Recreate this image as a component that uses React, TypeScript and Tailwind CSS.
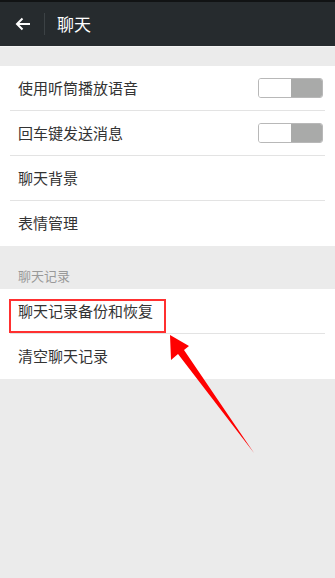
import type { ReactNode } from "react";

const FONT = { fontFamily: '"Noto Sans CJK SC", "Noto Sans", sans-serif' };

function Toggle() {
  return (
    <div className="flex h-[20px] w-[65px] overflow-hidden rounded-[3px] border border-[#b8b8b8]">
      <div className="flex-1 bg-white" />
      <div className="flex-1 bg-[#a9aaa9]" />
    </div>
  );
}

function Row({ label, last, right }: { label: string; last?: boolean; right?: ReactNode }) {
  return (
    <div className="px-[10px]">
      <div
        className={`flex h-[45px] items-center justify-between pl-[8px] pr-[2px] ${
          last ? "" : "border-b border-[#e3e3e3]"
        }`}
      >
        <span className="text-[15px] text-[#333333]">{label}</span>
        {right}
      </div>
    </div>
  );
}

export default function App() {
  return (
    <div className="relative min-h-[578px] w-full bg-[#ebebeb]" style={FONT}>
      {/* title bar */}
      <div className="flex h-[46px] items-center border-t-2 border-[#111314] bg-[#262b2e]">
        <div className="flex w-[44px] justify-center pl-[1px]">
          <svg width="16" height="14" viewBox="0 0 16 14" fill="none" stroke="white" strokeWidth="2">
            <path d="M15 7H2M7.5 1.5 2 7l5.5 5.5" />
          </svg>
        </div>
        <div className="h-[22px] w-px bg-[#3c4245]" />
        <span className="ml-[12px] text-[17px] text-white">聊天</span>
      </div>
      <div className="h-px bg-[#f4f4f4]" />

      <div className="h-[19px]" />

      <div className="bg-white">
        <Row label="使用听筒播放语音" right={<Toggle />} />
        <Row label="回车键发送消息" right={<Toggle />} />
        <Row label="聊天背景" />
        <Row label="表情管理" last />
      </div>

      <div className="flex h-[43px] items-end px-[18px] pb-[4px]">
        <span className="text-[13px] text-[#999999]">聊天记录</span>
      </div>

      <div className="bg-white">
        <Row label="聊天记录备份和恢复" />
        <Row label="清空聊天记录" last />
      </div>

      {/* annotation overlay */}
      <div className="absolute left-[9px] top-[299px] h-[34px] w-[157px] border-2 border-[#ff3030]" />
      <svg className="absolute left-0 top-0" width="335" height="578" viewBox="0 0 335 578">
        <polygon
          points="170,335 171,360 178,354 254,453 184,350 189,346"
          fill="#ff0000"
        />
      </svg>
    </div>
  );
}
